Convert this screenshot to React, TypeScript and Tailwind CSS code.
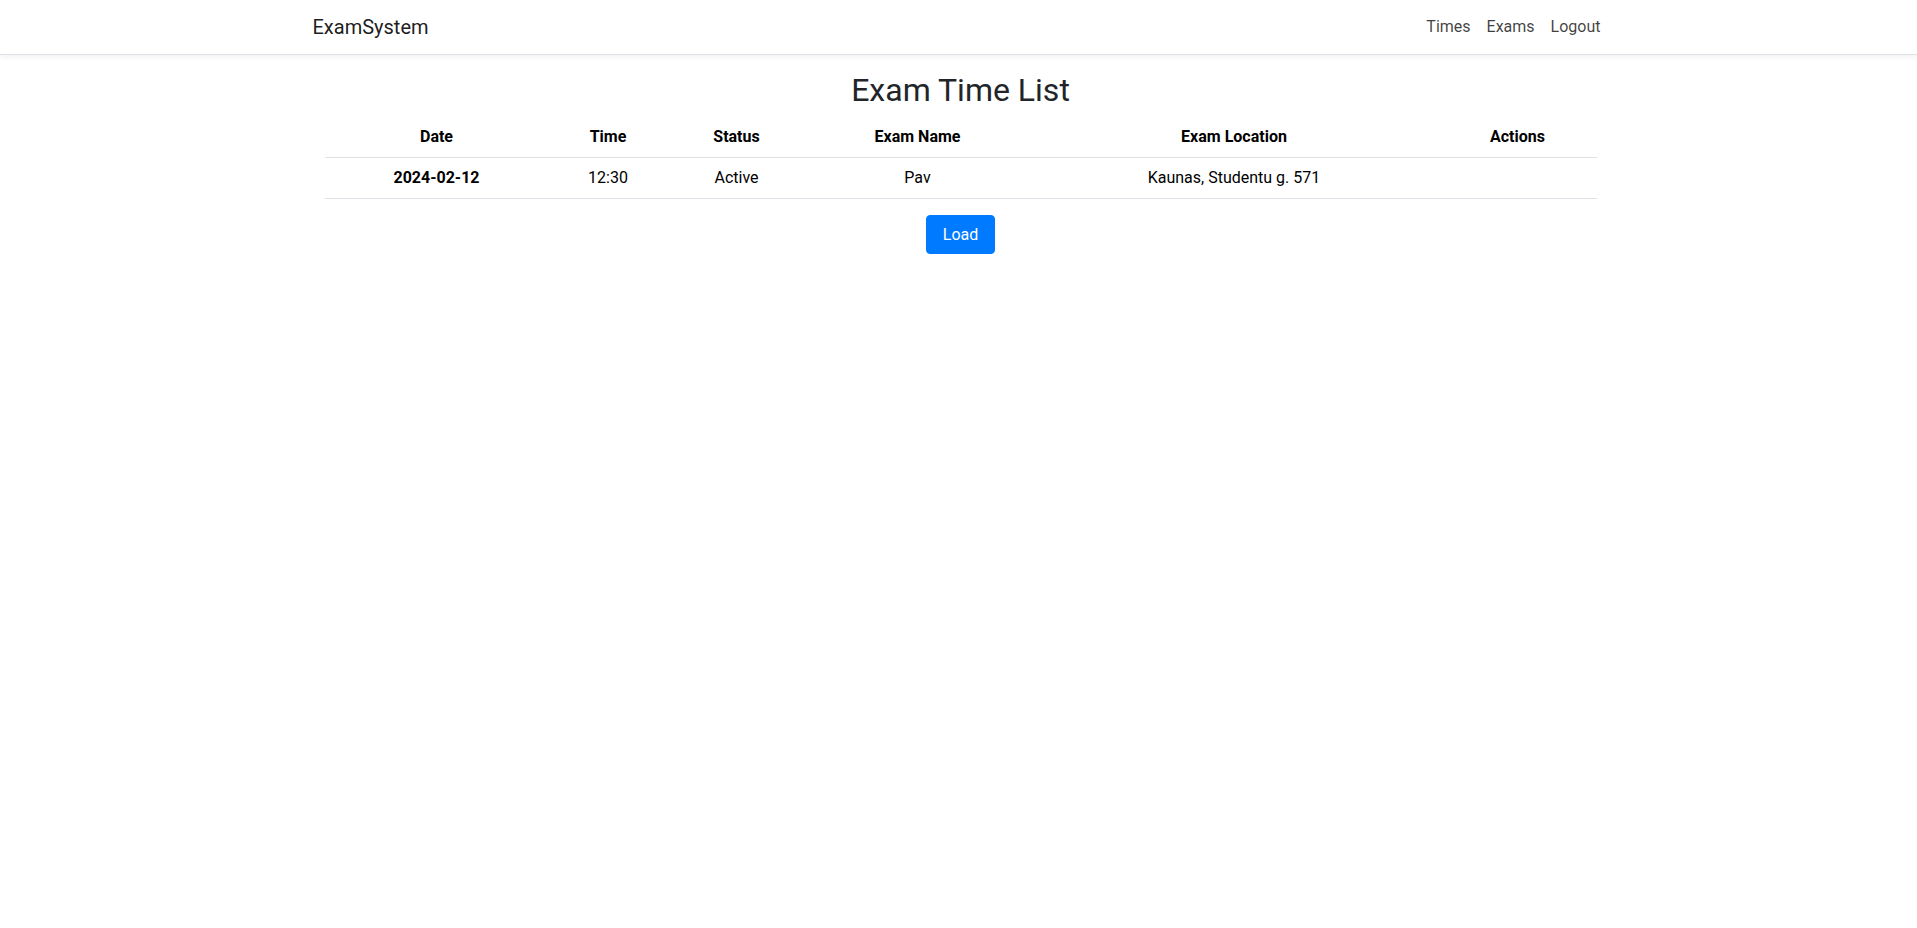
import React from "react";

export default function App() {
  const font = { fontFamily: "Roboto, 'Liberation Sans', sans-serif" };
  return (
    <div className="min-h-[928px] bg-white text-[#212529]" style={font}>
      <nav className="h-[55px] border-b border-[#dee2e6] bg-white pl-[4px] shadow-[0_2px_6px_rgba(0,0,0,0.06)]">
        <div className="mx-auto flex h-full w-[1320px] items-center justify-between px-3">
          <a className="text-[20px] leading-[30px] text-black/90">ExamSystem</a>
          <div className="flex text-[16px] leading-6 text-black/75">
            <a className="px-2">Times</a>
            <a className="px-2">Exams</a>
            <a className="px-2">Logout</a>
          </div>
        </div>
      </nav>
      <div className="pl-[4px]">
        <div className="mx-auto mt-4 w-[1320px] px-3">
          <div className="px-3">
            <h2 className="mb-2 text-center text-[32px] font-normal leading-[1.2] text-[#212529]">
              Exam Time List
            </h2>
            <table className="w-full table-fixed border-collapse text-center text-[16px] leading-6">
              <thead>
                <tr className="border-b border-[#dee2e6]">
                  <th className="w-[224px] p-2 font-bold text-black">Date</th>
                  <th className="w-[119px] p-2 font-bold text-black">Time</th>
                  <th className="w-[138px] p-2 font-bold text-black">Status</th>
                  <th className="w-[224px] p-2 font-bold text-black">Exam Name</th>
                  <th className="w-[409px] p-2 font-bold text-black">Exam Location</th>
                  <th className="p-2 font-bold text-black">Actions</th>
                </tr>
              </thead>
              <tbody>
                <tr className="border-b border-[#dee2e6]">
                  <th className="p-2 font-bold text-black">2024-02-12</th>
                  <td className="p-2 text-black">12:30</td>
                  <td className="p-2 text-black">Active</td>
                  <td className="p-2 text-black">Pav</td>
                  <td className="p-2 text-black">Kaunas, Studentu g. 571</td>
                  <td className="p-2"></td>
                </tr>
              </tbody>
            </table>
            <div className="mt-4 flex justify-center">
              <button className="h-[39px] rounded border border-[#007bff] bg-[#007bff] px-4 text-[16px] leading-6 text-white">
                Load
              </button>
            </div>
          </div>
        </div>
      </div>
    </div>
  );
}
